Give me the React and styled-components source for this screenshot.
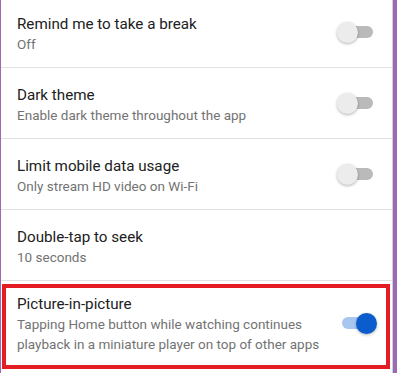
import React from 'react';
import styled, { createGlobalStyle } from 'styled-components';

const GlobalStyle = createGlobalStyle`
  html, body {
    margin: 0;
    padding: 0;
    background: #ffffff;
    overflow: hidden;
  }
  body {
    font-family: Roboto, "Noto Sans", Arial, sans-serif;
  }
`

const Frame = styled.div`
  display: flex;
  width: 397px;
  height: 373px;
  box-sizing: border-box;
  border-left: 1px solid #9a6ab4;
  border-right: 4px solid #9a6ab4;
  overflow: hidden;
`

const Panel = styled.div`
  flex: 1;
  border-right: 1px solid #d2d2d2;
  background: #ffffff;
`

const List = styled.ul`
  list-style: none;
  margin: -3px 0 0;
  padding: 0;
`

const Item = styled.li`
  border-bottom: 1px solid #e2e2e2;
  &:last-child {
    border-bottom: none;
  }
`

const Row = styled.div`
  display: flex;
  align-items: center;
  gap: 12px;
  box-sizing: border-box;
  padding: ${p => (p.$highlighted ? '6px 9px 11px 11px' : '17px 15px 13px 16px')};
  margin: ${p => (p.$highlighted ? '3px 2px 0 1px' : '0')};
  border: ${p => (p.$highlighted ? '4px solid #e41c24' : 'none')};
`

const Text = styled.div`
  flex: 1;
  min-width: 0;
`

const Title = styled.div`
  font-size: 15.2px;
  line-height: 20px;
  color: #212121;
`

const Subtitle = styled.div`
  font-size: 13.5px;
  line-height: 20px;
  color: #737373;
  white-space: nowrap;
`

const Switch = styled.div`
  position: relative;
  flex: none;
  display: flex;
  align-items: center;
  justify-content: center;
  width: 40px;
  height: 21px;
  margin-bottom: ${p => (p.$lift ? '2px' : '4px')};
`

const Track = styled.div`
  width: 31px;
  height: 12px;
  border-radius: 6px;
  background: ${p => (p.$on ? '#a8c6f0' : '#bababa')};
`

const Thumb = styled.div`
  position: absolute;
  top: 0;
  left: ${p => (p.$on ? '19px' : '0')};
  width: 21px;
  height: 21px;
  border-radius: 50%;
  background: ${p => (p.$on ? '#0b5ccd' : '#ececec')};
  box-shadow: 0 1px 3px rgba(0, 0, 0, 0.3);
`

const settings = [
  { title: 'Remind me to take a break', sub: ['Off'], toggle: true, on: false },
  { title: 'Dark theme', sub: ['Enable dark theme throughout the app'], toggle: true, on: false },
  { title: 'Limit mobile data usage', sub: ['Only stream HD video on Wi-Fi'], toggle: true, on: false },
  { title: 'Double-tap to seek', sub: ['10 seconds'], toggle: false },
  {
    title: 'Picture-in-picture',
    sub: [
      'Tapping Home button while watching continues',
      'playback in a miniature player on top of other apps',
    ],
    toggle: true,
    on: true,
    highlighted: true,
  },
]

const Toggle = ({ on, lift }) => (
  <Switch $lift={lift}>
    <Track $on={on} />
    <Thumb $on={on} />
  </Switch>
)

export default function App() {
  return (
    <>
      <GlobalStyle />
      <Frame>
        <Panel>
          <List>
            {settings.map(s => (
              <Item key={s.title}>
                <Row $highlighted={s.highlighted}>
                  <Text>
                    <Title>{s.title}</Title>
                    {s.sub.map(line => (
                      <Subtitle key={line}>{line}</Subtitle>
                    ))}
                  </Text>
                  {s.toggle && <Toggle on={s.on} lift={s.highlighted} />}
                </Row>
              </Item>
            ))}
          </List>
        </Panel>
      </Frame>
    </>
  )
}
